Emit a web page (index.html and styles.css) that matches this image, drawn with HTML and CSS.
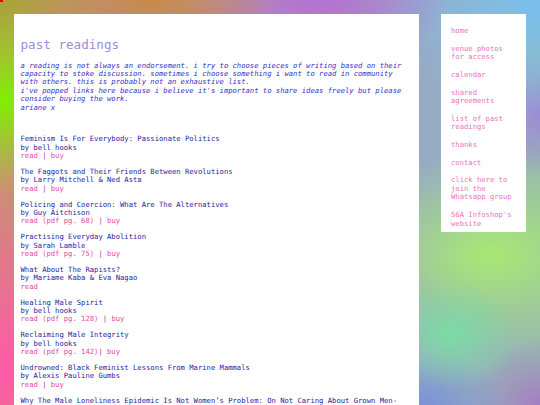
FILE: index.html
```html
<!DOCTYPE html>
<html lang="en">
<head>
<meta charset="utf-8">
<title>past readings</title>
<link rel="stylesheet" href="styles.css">
</head>
<body>
<div class="corner-mark"></div>
<main class="panel">
  <h1 class="title">past readings</h1>
  <p class="intro">a reading is not always an endorsement. i try to choose pieces of writing based on their capacity to stoke discussion. sometimes i choose something i want to read in community with others. this is probably not an exhaustive list.<br>i've popped links here because i believe it's important to share ideas freely but please consider buying the work.<br>ariane x</p>
  <div class="list">
    <p class="item"><span class="name">Feminism Is For Everybody: Passionate Politics</span><br><span class="name">by bell hooks</span><br><a class="lnk">read</a> <span class="sep">|</span> <a class="lnk">buy</a></p>
    <p class="item"><span class="name">The Faggots and Their Friends Between Revolutions</span><br><span class="name">by Larry Mitchell &amp; Ned Asta</span><br><a class="lnk">read</a> <span class="sep">|</span> <a class="lnk">buy</a></p>
    <p class="item"><span class="name">Policing and Coercion: What Are The Alternatives</span><br><span class="name">by Guy Aitchison</span><br><a class="lnk">read (pdf pg. 68)</a> <span class="sep">|</span> <a class="lnk">buy</a></p>
    <p class="item"><span class="name">Practising Everyday Abolition</span><br><span class="name">by Sarah Lamble</span><br><a class="lnk">read (pdf pg. 75)</a> <span class="sep">|</span> <a class="lnk">buy</a></p>
    <p class="item"><span class="name">What About The Rapists?</span><br><span class="name">by Mariame Kaba &amp; Eva Nagao</span><br><a class="lnk">read</a></p>
    <p class="item"><span class="name">Healing Male Spirit</span><br><span class="name">by bell hooks</span><br><a class="lnk">read (pdf pg. 128)</a> <span class="sep">|</span> <a class="lnk">buy</a></p>
    <p class="item"><span class="name">Reclaiming Male Integrity</span><br><span class="name">by bell hooks</span><br><a class="lnk">read (pdf pg. 142)</a><span class="sep">|</span> <a class="lnk">buy</a></p>
    <p class="item"><span class="name">Undrowned: Black Feminist Lessons From Marine Mammals</span><br><span class="name">by Alexis Pauline Gumbs</span><br><a class="lnk">read</a> <span class="sep">|</span> <a class="lnk">buy</a></p>
    <p class="item"><span class="name">Why The Male Loneliness Epidemic Is Not Women’s Problem: On Not Caring About Grown Men-children</span><br><span class="name">by Jose Alejandro</span><br><a class="lnk">read</a></p>
  </div>
</main>
<nav class="side">
  <a class="nav">home</a>
  <a class="nav">venue photos for access</a>
  <a class="nav">calendar</a>
  <a class="nav">shared agreements</a>
  <a class="nav">list of past readings</a>
  <a class="nav">thanks</a>
  <a class="nav">contact</a>
  <a class="nav">click here to join the Whatsapp group</a>
  <a class="nav">56A Infoshop's website</a>
</nav>
</body>
</html>
```
FILE: styles.css
```css
html, body {
  margin: 0;
  height: 405px;
  overflow: hidden;
}
body {
  position: relative;
  display: flex;
  align-items: flex-start;
  gap: 22px;
  padding: 14px 14px 0 14px;
  box-sizing: border-box;
  font-family: "DejaVu Sans Mono", monospace;
  font-size: 7.2px;
  line-height: 8.4px;
  background-color: #a8a8c0;
  background-image:
    radial-gradient(ellipse 120px 95px at 0px 100px, #80f000, rgba(128,240,0,0)),
    radial-gradient(ellipse 150px 170px at 0px 370px, #ff5aa8, rgba(255,90,168,0)),
    radial-gradient(ellipse 110px 90px at 0px 0px, #a8a434, rgba(168,164,52,0)),
    radial-gradient(ellipse 130px 60px at 150px 0px, #c88a48, rgba(200,138,72,0)),
    radial-gradient(ellipse 130px 70px at 320px 0px, #b470d2, rgba(180,112,210,0)),
    radial-gradient(ellipse 160px 120px at 545px 0px, #78c0f2, rgba(120,192,242,0)),
    radial-gradient(ellipse 70px 60px at 545px 115px, #9c88d8, rgba(156,136,216,0)),
    radial-gradient(ellipse 70px 55px at 450px 335px, #7cdca4, rgba(124,220,164,0)),
    radial-gradient(ellipse 160px 100px at 490px 255px, #a8e874, rgba(168,232,116,0)),
    radial-gradient(ellipse 90px 60px at 420px 410px, #7890d8, rgba(120,144,216,0)),
    radial-gradient(ellipse 80px 70px at 545px 410px, #a478c4, rgba(164,120,196,0)),
    linear-gradient(90deg, #d08a78 0%, #b090b0 45%, #98a8c8 75%, #98b8b0 100%);
}
.corner-mark {
  position: absolute;
  left: 0;
  top: 0;
  width: 3px;
  height: 2px;
  background: #f00000;
}
.panel {
  width: 405px;
  flex: none;
  box-sizing: border-box;
  background: #ffffff;
  padding: 24px 6.5px 40px 6.5px;
  min-height: 420px;
}
.title {
  margin: 0;
  font-weight: normal;
  font-size: 12.6px;
  line-height: 14.7px;
  color: #9d8ed8;
}
.intro {
  margin: 8.8px 0 0 0;
  font-style: italic;
  color: #3430c8;
}
.list {
  margin-top: 23.4px;
}
.item {
  margin: 0 0 7.45px 0;
}
.name {
  color: #1e1c9c;
}
.lnk {
  color: #e04aa0;
}
.sep {
  color: #a83890;
}
.side {
  width: 85px;
  flex: none;
  box-sizing: border-box;
  background: #ffffff;
  padding: 13.3px 6px 3.5px 10px;
  display: flex;
  flex-direction: column;
  gap: 9px;
}
.nav {
  color: #ea72be;
  line-height: 8.6px;
}
```
